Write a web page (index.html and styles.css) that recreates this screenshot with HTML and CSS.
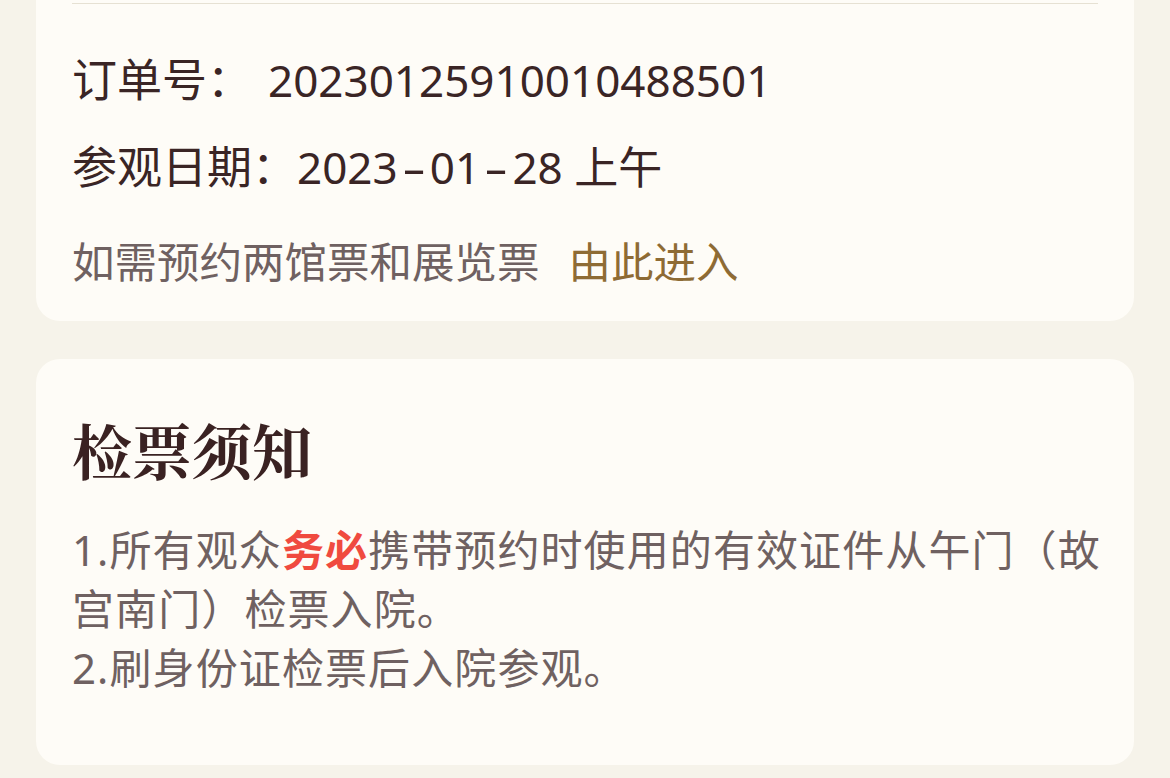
FILE: index.html
```html
<!DOCTYPE html>
<html lang="zh-CN">
<head>
<meta charset="utf-8">
<title>订单详情</title>
<link rel="stylesheet" href="styles.css">
</head>
<body>
<div class="page">
  <section class="card card-order">
    <div class="divider"></div>
    <div class="row row-order"><span class="label">订单号：</span><span class="value value-order">20230125910010488501</span></div>
    <div class="row row-date"><span class="label">参观日期：</span><span class="value">2023<span class="dash">-</span>01<span class="dash">-</span>28 上午</span></div>
    <div class="row row-link"><span class="hint">如需预约两馆票和展览票</span><a class="link">由此进入</a></div>
  </section>
  <section class="card card-notice">
    <h2 class="title">检票须知</h2>
    <div class="notice">
      <p>1.所有观众<strong class="em">务必</strong>携带预约时使用的有效证件从午门（故宫南门）检票入院。</p>
      <p>2.刷身份证检票后入院参观。</p>
    </div>
  </section>
</div>
</body>
</html>
```

FILE: styles.css
```css
html, body {
  margin: 0;
  padding: 0;
  background: #f6f3ea;
}
body {
  width: 1170px;
  height: 778px;
  overflow: hidden;
  font-family: "Noto Sans", "Noto Sans CJK SC", sans-serif;
}
.page {
  display: flex;
  flex-direction: column;
  gap: 38px;
  padding: 0 36px;
}
.card {
  background: #fefcf7;
  border-radius: 24px;
  padding: 0 36px;
}
.card-order {
  border-top-left-radius: 0;
  border-top-right-radius: 0;
  height: 321px;
  box-sizing: border-box;
  padding-top: 3px;
}
.divider {
  height: 1px;
  background: #e6e1d3;
}
.row {
  height: 60px;
  line-height: 60px;
  white-space: nowrap;
}
.row-order {
  margin-top: 46px;
  font-size: 44px;
  color: #3a2525;
}
.row-date {
  margin-top: 27px;
  font-size: 44px;
  color: #3a2525;
}
.label {
  font-size: 45px;
}
.row-link {
  margin-top: 35px;
  font-size: 42.5px;
}
.value-order {
  margin-left: 16px;
}
.dash {
  display: inline-block;
  margin: 0 9px;
  transform: scaleX(1.7);
}
.hint {
  color: #6f6161;
}
.link {
  margin-left: 29px;
  color: #8e6b34;
  text-decoration: none;
}
.card-notice {
  height: 406px;
  box-sizing: border-box;
  padding-top: 54px;
}
.title {
  margin: 0;
  font-family: "Noto Serif CJK SC", "Noto Sans CJK SC", serif;
  font-size: 60px;
  font-weight: 700;
  line-height: 72px;
  color: #3a2222;
}
.notice {
  margin-top: 35px;
  margin-right: -20px;
  font-size: 42px;
  line-height: 59px;
  color: #6f6161;
}
.notice p {
  margin: 0;
  letter-spacing: 1.1px;
}
.em {
  color: #f04a3f;
  font-weight: 700;
}
```
